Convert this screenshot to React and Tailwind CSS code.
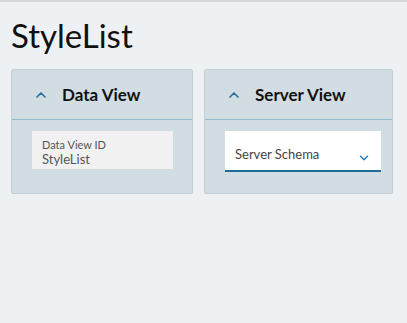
import { ChevronUp, ChevronDown } from 'lucide-react'

function Card({ title, width, children }) {
  return (
    <section className="flex flex-col bg-[#d1dde2] border border-[#c3cfd4] rounded-[2px]" style={{ width }}>
      <header className="flex items-center h-[50px] pl-[21px] border-b border-[#8fbccb]">
        <ChevronUp size={16} strokeWidth={2.5} className="text-[#2a6f9e] mt-[1px]" />
        <h2 className="ml-[13px] text-[17px] font-bold text-[#111]">{title}</h2>
      </header>
      <div className="pt-[11px] pb-[21px] pl-[20px]">{children}</div>
    </section>
  )
}

export default function App() {
  return (
    <div className="min-h-[323px] bg-[#eef1f4] border-t-2 border-[#d4d7d9] px-[11px] font-['Lato','Open_Sans',sans-serif]">
      <h1 className="pt-[14px] pb-[14px] text-[33px] leading-[39px] text-[#111]">StyleList</h1>
      <div className="flex gap-[11px]">
        <Card title="Data View" width={182}>
          <div className="w-[141px] h-[39px] bg-[#f1f1f1] border-b border-[#d6d6d6] px-[10px] pt-[7px]">
            <div className="text-[11px] leading-[13px] text-[#555]">Data View ID</div>
            <div className="text-[13px] leading-[16px] text-[#555]">StyleList</div>
          </div>
        </Card>
        <Card title="Server View" width={189}>
          <div className="flex items-center justify-between w-[156px] h-[41px] bg-white border-b-2 border-[#1f6c99] pl-[10px] pr-[10px]">
            <span className="text-[13px] text-[#444] mt-[8px]">Server Schema</span>
            <ChevronDown size={14} strokeWidth={2.5} className="text-[#2a79c4] mt-[14px]" />
          </div>
        </Card>
      </div>
    </div>
  )
}
